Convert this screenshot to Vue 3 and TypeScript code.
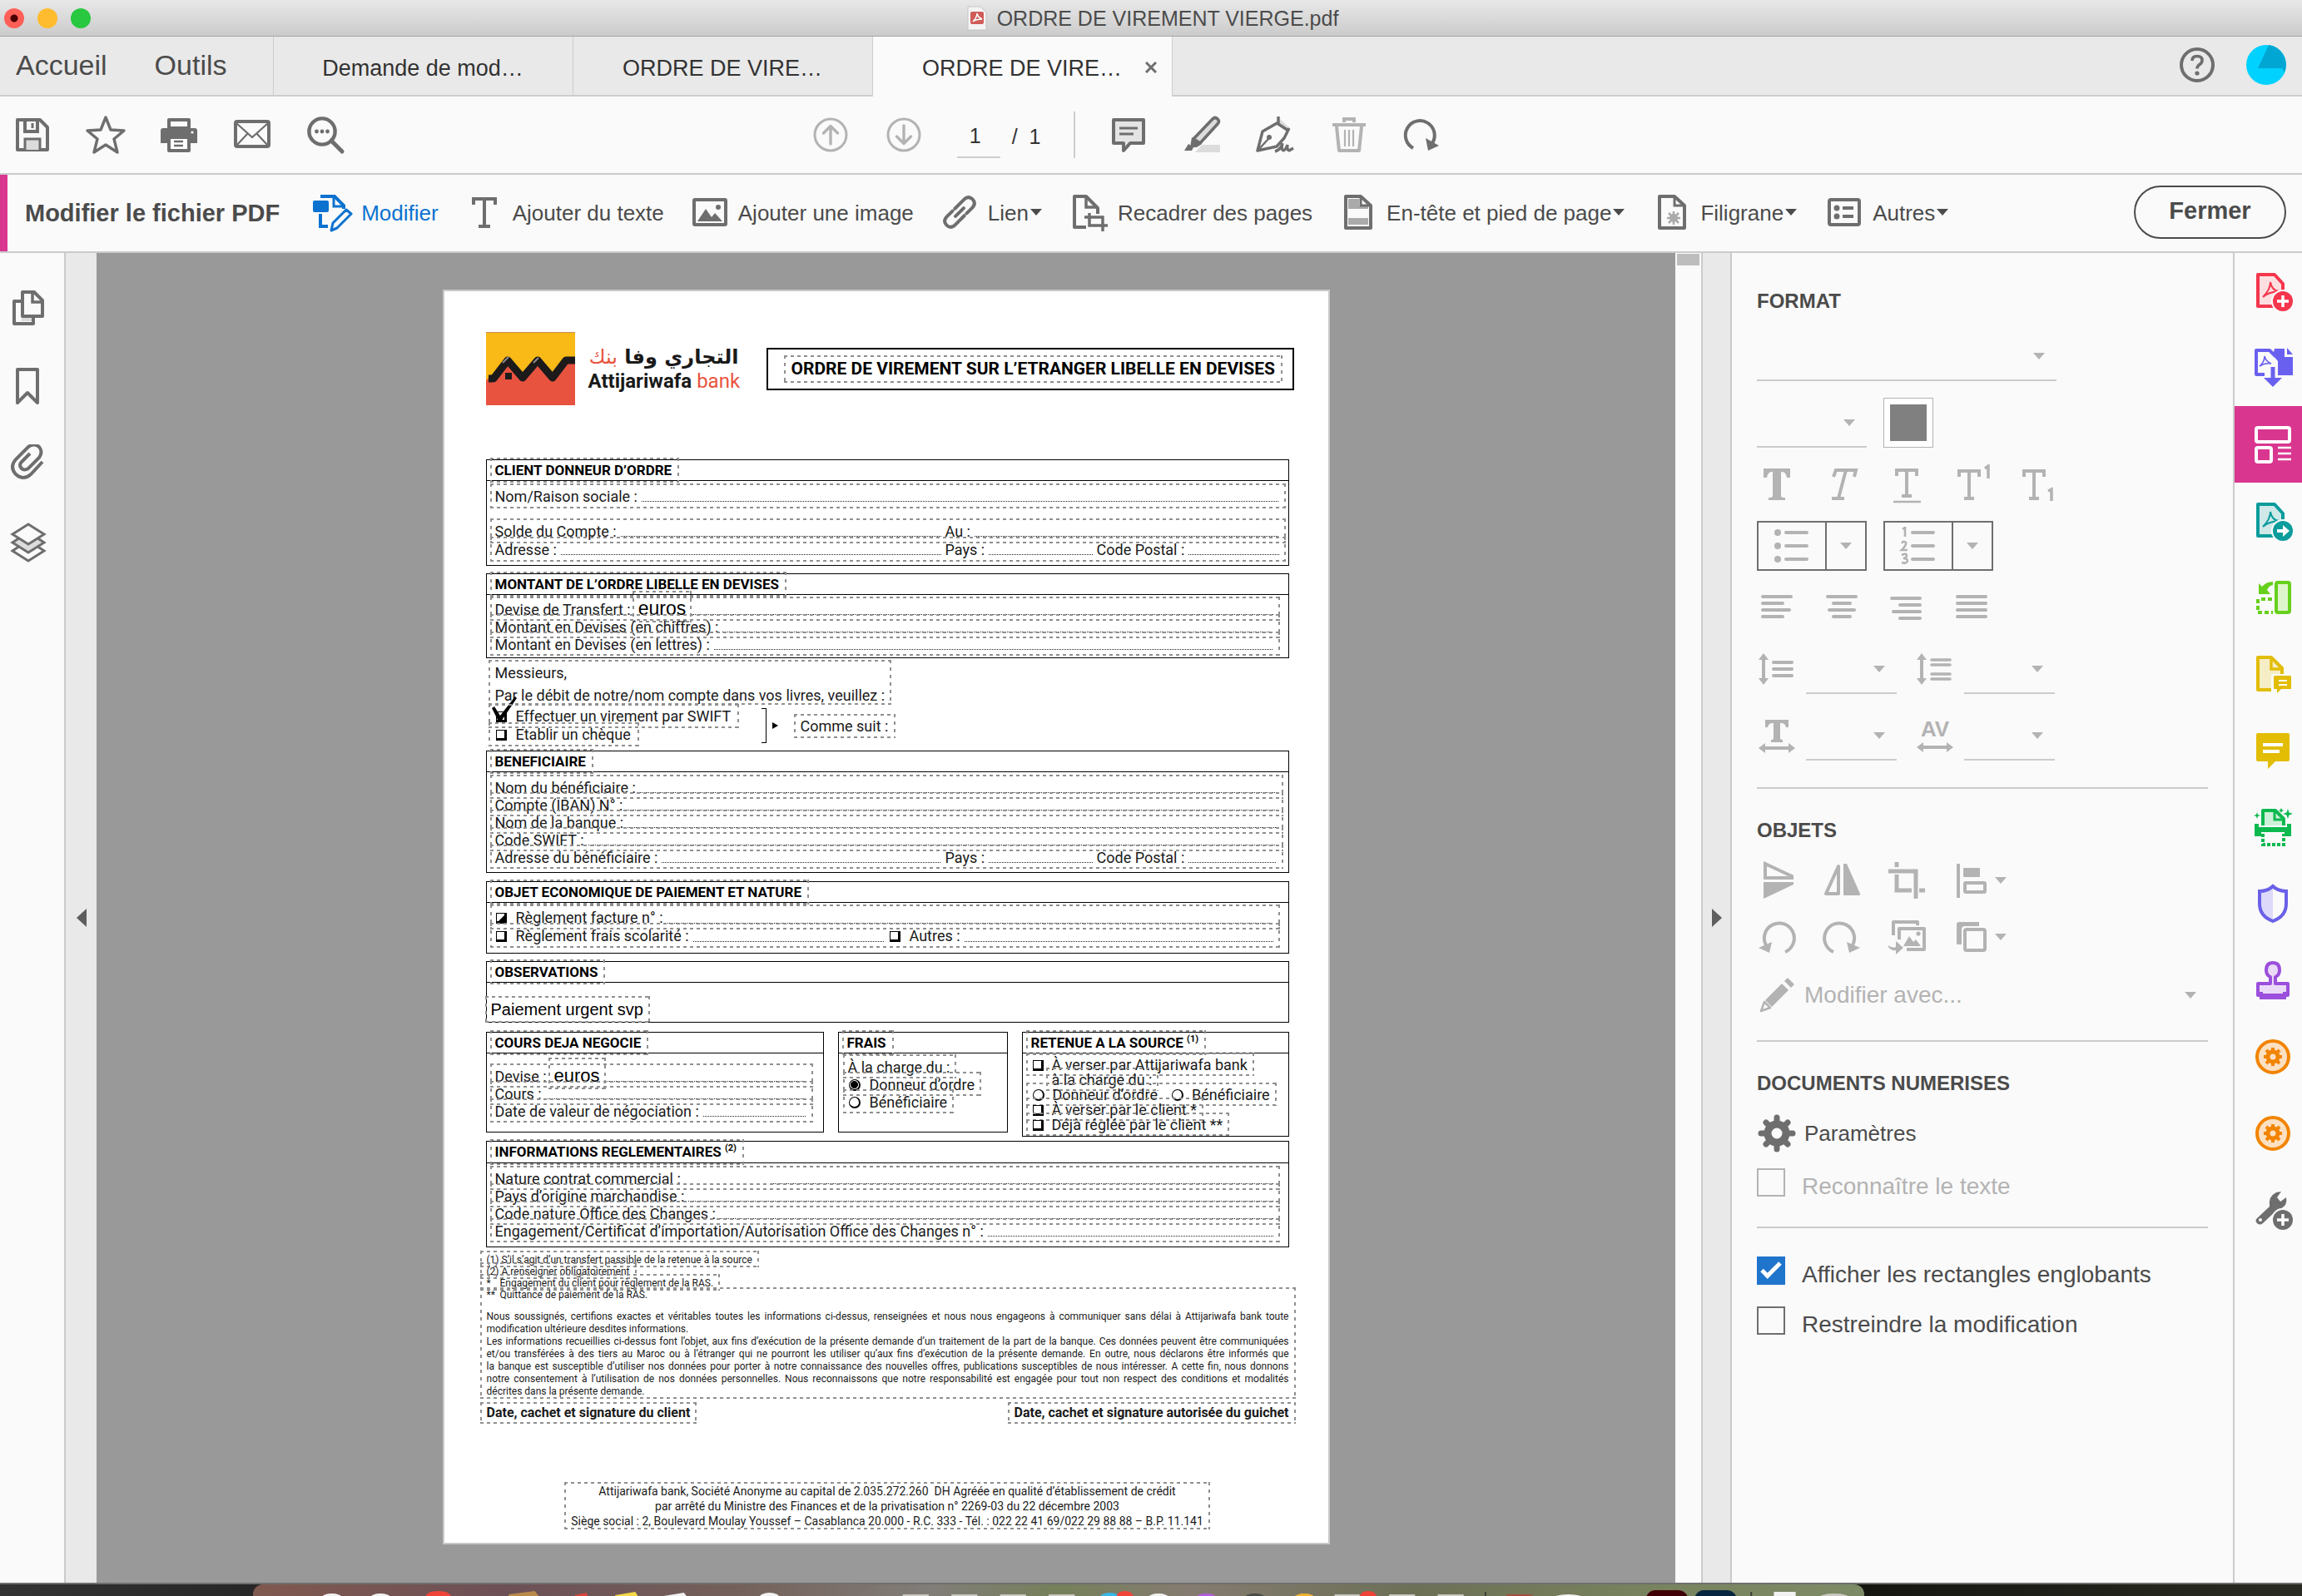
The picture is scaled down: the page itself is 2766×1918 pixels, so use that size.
<script setup lang="ts">
import { h, ref, type FunctionalComponent } from 'vue'

/* Every glyph is drawn in a 48 × 48 box. */
const glyphs: Record<string, string> = {
  save: '<path d="M6 6H33L42 15V42H6Z" fill="none" stroke="currentColor" stroke-width="4" stroke-linejoin="round"/><path d="M15 6V20H30V6" fill="none" stroke="currentColor" stroke-width="4"/><path d="M24 10V16" stroke="currentColor" stroke-width="3"/><path d="M15 42V29H33V42" fill="#dcdcdc" stroke="currentColor" stroke-width="3"/>',
  star: '<path d="M24 3L30 18L46 19L34 29L38 45L24 36L10 45L14 29L2 19L18 18Z" fill="none" stroke="currentColor" stroke-width="3.4" stroke-linejoin="round"/>',
  print: '<path d="M12 6H36V16H12Z" fill="none" stroke="currentColor" stroke-width="4" stroke-linejoin="round"/><path d="M5 16H43Q46 16 46 19V34H38V28H10V34H2V19Q2 16 5 16Z" fill="currentColor"/><path d="M12 27H36V43H12Z" fill="#fff" stroke="currentColor" stroke-width="4" stroke-linejoin="round"/><path d="M18 32H29M18 37H29" stroke="currentColor" stroke-width="2.4"/><circle cx="40" cy="21" r="1.6" fill="#fff"/>',
  mail: '<rect x="4" y="8" width="40" height="30" rx="2" fill="none" stroke="currentColor" stroke-width="4"/><path d="M5 10L24 27L43 10M5 37L19 22M43 37L29 22" fill="none" stroke="currentColor" stroke-width="2.2"/>',
  find: '<circle cx="20" cy="20" r="15.6" fill="none" stroke="currentColor" stroke-width="4.4"/><path d="M31 31L44 44" stroke="currentColor" stroke-width="5" stroke-linecap="round"/><circle cx="13.500" cy="20" r="2.4" fill="currentColor"/><circle cx="20" cy="20" r="2.4" fill="currentColor"/><circle cx="26.500" cy="20" r="2.4" fill="currentColor"/>',
  up: '<circle cx="24" cy="24" r="19" fill="none" stroke="currentColor" stroke-width="3"/><path d="M24 35V14M15.500 22L24 13.500L32.500 22" fill="none" stroke="currentColor" stroke-width="3.4" stroke-linecap="round" stroke-linejoin="round"/>',
  down: '<circle cx="24" cy="24" r="19" fill="none" stroke="currentColor" stroke-width="3"/><path d="M24 13V34M15.500 26L24 34.500L32.500 26" fill="none" stroke="currentColor" stroke-width="3.4" stroke-linecap="round" stroke-linejoin="round"/>',
  comment: '<path d="M6 6H42V34H26L18 43V34H6Z" fill="#e4e4e4" stroke="currentColor" stroke-width="4" stroke-linejoin="round"/><path d="M13 16H35M13 23H30" stroke="currentColor" stroke-width="3"/>',
  marker: '<path d="M16 45L24 36H46V45Z" fill="#dcdcdc"/><path d="M14 29L37 5Q40 2 43 5Q46 8 43 11L22 34Z" fill="#dcdcdc" stroke="currentColor" stroke-width="3.600" stroke-linejoin="round"/><path d="M12 27L24 35L18 39H10Z" fill="currentColor"/><path d="M3 43L8 35L14 39L12 43Z" fill="currentColor"/>',
  sign: '<path d="M28 3L42 16L38 20L26 10Z" fill="#dcdcdc"/><path d="M28 2V11L40 19M28 9L9 20L3 43L26 38L35 28L41 16" fill="none" stroke="currentColor" stroke-width="3.400" stroke-linejoin="round"/><path d="M3 43L16 29" stroke="currentColor" stroke-width="2.4"/><circle cx="17" cy="27" r="3" fill="currentColor"/><path d="M24 44Q31 42 33 34Q31 42 34 43Q37 42 39 36Q38 42 41 43L46 40" fill="none" stroke="currentColor" stroke-width="3.4"/>',
  trash: '<path d="M5 10H45V14H5Z" fill="currentColor"/><path d="M19 9V5H31V9" fill="none" stroke="currentColor" stroke-width="4"/><path d="M10 14L13 43H37L40 14" fill="none" stroke="currentColor" stroke-width="4" stroke-linejoin="round"/><path d="M20 18V38M25 18V38M30 18V38" stroke="currentColor" stroke-width="2.200"/>',
  rotate: '<path d="M14 40A17.500 17.500 0 1 1 37 34" fill="none" stroke="currentColor" stroke-width="4"/><path d="M29 28L45 37L32 43Z" fill="currentColor"/>',
  help: '<circle cx="24" cy="24" r="19" fill="none" stroke="currentColor" stroke-width="4"/><path d="M18 19Q18 13.500 24 13.500Q30 13.500 30 18.500Q30 21.500 27 23.500Q24 25.500 24 28.500" fill="none" stroke="currentColor" stroke-width="3.600"/><circle cx="24" cy="34" r="2.600" fill="currentColor"/>',
  edit: '<path d="M9 5H26L37 16V20" fill="none" stroke="currentColor" stroke-width="4"/><path d="M25 5V17H37" fill="none" stroke="currentColor" stroke-width="3"/><path d="M9 26V41H18" fill="none" stroke="currentColor" stroke-width="4"/><rect x="0" y="10" width="19" height="14" rx="2" fill="currentColor"/><path d="M40 21L46 26L29 43L22 46L24 37Z" fill="#fafafa" stroke="currentColor" stroke-width="3" stroke-linejoin="round"/>',
  text: '<path d="M11 15V8H37V15M24 8V41M17 41H31" fill="none" stroke="currentColor" stroke-width="4"/>',
  image: '<rect x="5" y="9" width="38" height="30" rx="1" fill="none" stroke="currentColor" stroke-width="4"/><path d="M9 35L19 20L26 30L30 25L39 35Z" fill="currentColor"/><circle cx="34" cy="18" r="3" fill="currentColor"/>',
  link: '<g fill="none" stroke="currentColor" stroke-width="4" stroke-linecap="round" transform="rotate(-45 24 24)"><path d="M23 17H38Q46 17 46 24T38 31H29"/><path d="M25 31H10Q2 31 2 24T10 17H19"/><path d="M17 24H31"/></g>',
  crop: '<path d="M20 42H6V5H20L34 19V26" fill="none" stroke="currentColor" stroke-width="4" stroke-linejoin="round"/><path d="M20 5V18H34" fill="none" stroke="currentColor" stroke-width="3.500"/><path d="M24 25V40H46M18 30H40V47" fill="none" stroke="currentColor" stroke-width="3.500"/>',
  header: '<path d="M9 5H27L39 16V43H9Z" fill="none" stroke="currentColor" stroke-width="4" stroke-linejoin="round"/><path d="M12 8H25V17H36V20H12Z" fill="#aaa"/><path d="M12 31H36V39H12Z" fill="#aaa"/><path d="M27 6V16H38" fill="none" stroke="currentColor" stroke-width="3"/>',
  filigrane: '<path d="M9 5H27L39 16V43H9Z" fill="none" stroke="currentColor" stroke-width="4" stroke-linejoin="round"/><path d="M27 6V16H38" fill="none" stroke="currentColor" stroke-width="3"/><circle cx="26" cy="31" r="5" fill="#aaa"/><path d="M26 23V39M18 31H34M20 25L32 37M32 25L20 37" stroke="#aaa" stroke-width="2.500"/>',
  autres: '<rect x="6" y="9" width="36" height="30" rx="2" fill="none" stroke="currentColor" stroke-width="4"/><circle cx="15" cy="19" r="3.500" fill="currentColor"/><circle cx="15" cy="29" r="3.500" fill="currentColor"/><path d="M22 19H35M22 29H35" stroke="currentColor" stroke-width="4"/>',
  pages: '<path d="M15 16H7V43H30V36" fill="none" stroke="currentColor" stroke-width="4" stroke-linejoin="round"/><path d="M16 36H28V40H16Z" fill="#dcdcdc"/><path d="M17 5H31L41 15V34H17Z" fill="#fafafa" stroke="currentColor" stroke-width="4" stroke-linejoin="round"/><path d="M29 5V17H41" fill="none" stroke="currentColor" stroke-width="3.500"/>',
  bookmark: '<path d="M11 4H35V44L23 32L11 44Z" fill="none" stroke="currentColor" stroke-width="4" stroke-linejoin="round"/>',
  clip: '<path d="M41 21L27 36Q18 44 9 36Q1 27 9 18L24 3Q31 -2 37 3Q42 9 37 16L24 29Q19 32 16 29Q12 25 16 21L26 11" fill="none" stroke="currentColor" stroke-width="4"/>',
  layers: '<path d="M5 34L24 46L43 34L34 28H14Z" fill="#fafafa" stroke="currentColor" stroke-width="3"/><path d="M5 24L24 36L43 24L34 18H14Z" fill="#dcdcdc" stroke="currentColor" stroke-width="3"/><path d="M5 14L24 2L43 14L24 26Z" fill="#fafafa" stroke="currentColor" stroke-width="3"/>',
  bold: '<path d="M8 5H40V16H36Q35 9 30 9H29V38Q29 40 34 40V43H14V40Q19 40 19 38V9H18Q13 9 12 16H8Z" fill="currentColor"/>',
  italic: '<path d="M14 15L17 7H41L39 15M29 7L20 41M12 41H27" fill="none" stroke="currentColor" stroke-width="4"/>',
  under: '<path d="M12 14V7H36V14M24 7V38M18 38H30" fill="none" stroke="currentColor" stroke-width="4"/><path d="M8 45H41" stroke="currentColor" stroke-width="2.500"/>',
  sup: '<path d="M9 15V8H33V15M21 8V41M15 41H27" fill="none" stroke="currentColor" stroke-width="4"/><path d="M40 5L44 2V17" fill="none" stroke="currentColor" stroke-width="3.500"/>',
  sub: '<path d="M9 15V8H33V15M21 8V41M15 41H27" fill="none" stroke="currentColor" stroke-width="4"/><path d="M38 32L42 30V44" fill="none" stroke="currentColor" stroke-width="3.500"/>',
  bullets: '<circle cx="7" cy="7" r="4" fill="currentColor"/><circle cx="7" cy="23" r="4" fill="currentColor"/><circle cx="7" cy="39" r="4" fill="currentColor"/><path d="M17 7H42M17 23H42M17 39H42" stroke="currentColor" stroke-width="4" stroke-linecap="round"/>',
  numbers: '<path d="M5 3L8 1V12M4 20Q6 16 9 19Q10 22 4 28H11M4 34Q10 31 10 35Q10 37 6 38Q11 38 11 41Q10 45 4 43" fill="none" stroke="currentColor" stroke-width="2.600"/><path d="M17 7H42M17 23H42M17 39H42" stroke="currentColor" stroke-width="4" stroke-linecap="round"/>',
  left: '<path d="M7 11H41M7 19H31M7 27H39M7 35H31" stroke="currentColor" stroke-width="4" stroke-linecap="round"/>',
  center: '<path d="M7 11H41M14 19H34M9 27H39M14 35H34" stroke="currentColor" stroke-width="4" stroke-linecap="round"/>',
  right: '<path d="M6 13H40M16 21H40M8 29H40M16 37H40" stroke="currentColor" stroke-width="4" stroke-linecap="round"/>',
  justify: '<path d="M7 11H41M7 19H41M7 27H41M7 35H41" stroke="currentColor" stroke-width="4" stroke-linecap="round"/>',
  leading: '<path d="M8 10V38" stroke="currentColor" stroke-width="4"/><path d="M2 13L8 5L14 13ZM2 35L8 43L14 35Z" fill="currentColor"/><path d="M20 16H42M20 24H42M20 32H42" stroke="currentColor" stroke-width="4" stroke-linecap="round"/>',
  spacing: '<path d="M8 10V38" stroke="currentColor" stroke-width="4"/><path d="M2 13L8 5L14 13ZM2 35L8 43L14 35Z" fill="currentColor"/><path d="M20 13H42M20 19H42M20 30H42M20 36H42" stroke="currentColor" stroke-width="3.600" stroke-linecap="round"/>',
  scaleX: '<path d="M10 5H38V14H35Q34 9 29 9H28V27Q28 29 31 29V32H17V29Q20 29 20 27V9H19Q14 9 13 14H10Z" fill="currentColor"/><path d="M8 39H40" stroke="currentColor" stroke-width="4"/><path d="M10 33L2 39L10 45ZM38 33L46 39L38 45Z" fill="currentColor"/>',
  arrowX: '<path d="M8 8H40" stroke="currentColor" stroke-width="4"/><path d="M10 2L2 8L10 14ZM38 2L46 8L38 14Z" fill="currentColor"/>',
  flipV: '<path d="M10 4L42 19V21H10Z" fill="none" stroke="currentColor" stroke-width="4"/><path d="M8 26H44V29L8 46Z" fill="currentColor"/>',
  flipH: '<path d="M20 7V40H5Z" fill="none" stroke="currentColor" stroke-width="4" stroke-linejoin="round"/><path d="M26 4H30L46 40V42H26Z" fill="currentColor"/>',
  cropObj: '<path d="M2 13H35V46M12 2V8M12 17V36H30M39 36H46" fill="none" stroke="currentColor" stroke-width="5"/>',
  alignObj: '<path d="M8 4V45" stroke="currentColor" stroke-width="4"/><rect x="14" y="9" width="20" height="11" rx="1" fill="currentColor"/><rect x="16" y="27" width="24" height="11" rx="1" fill="none" stroke="currentColor" stroke-width="4"/>',
  rotL: '<path d="M34 42A18 18 0 1 0 11 34" fill="none" stroke="currentColor" stroke-width="4"/><path d="M2 37L18 30L15 43Z" fill="currentColor"/>',
  rotR: '<path d="M14 42A18 18 0 1 1 37 34" fill="none" stroke="currentColor" stroke-width="4"/><path d="M46 37L30 30L33 43Z" fill="currentColor"/>',
  replace: '<path d="M8 22V6H37V10" fill="none" stroke="currentColor" stroke-width="4" stroke-linejoin="round"/><path d="M15 27V14H45V39H24" fill="none" stroke="currentColor" stroke-width="4" stroke-linejoin="round"/><path d="M20 35L27 23L32 30L35 27L41 35Z" fill="currentColor"/><circle cx="38" cy="20" r="2.600" fill="currentColor"/><path d="M1 34Q8 38 11 36V29L20 37L11 45V40Q4 41 1 34Z" fill="currentColor"/>',
  arrange: '<path d="M6 33V9Q6 6 9 6H33V11H16Q12 11 12 15V33Z" fill="currentColor"/><rect x="16" y="15" width="24" height="25" rx="2" fill="none" stroke="currentColor" stroke-width="4"/>',
  pencil: '<path d="M10 30L30 10L38 18L18 38Z" fill="currentColor"/><path d="M33 7L37 3L45 11L41 15Z" fill="currentColor"/><path d="M9 32L16 39L5 43Z" fill="none" stroke="currentColor" stroke-width="2.500" stroke-linejoin="round"/>',
  gear: '<circle cx="24" cy="24" r="11" fill="none" stroke="currentColor" stroke-width="9"/><path d="M24 5V12M24 36V43M5 24H12M36 24H43M11 11L15 15M33 33L37 37M37 11L33 15M15 33L11 37" stroke="currentColor" stroke-width="7" stroke-linecap="round"/>',
  create: '<path d="M6 4H26L36 15V42H6Z" fill="#fddfe2" stroke="currentColor" stroke-width="4" stroke-linejoin="round"/><path d="M12 31Q21 22 21 13Q23 24 32 24Q18 25 12 31Z" fill="none" stroke="currentColor" stroke-width="2"/><circle cx="36" cy="36" r="14" fill="#fafafa"/><circle cx="36" cy="36" r="12" fill="currentColor"/><path d="M36 29V43M29 36H43" stroke="#fff" stroke-width="3.500"/>',
  export: '<path d="M14 32H4V3H20L27 10" fill="none" stroke="currentColor" stroke-width="4" stroke-linejoin="round"/><path d="M26 1H38V11H48V33H30V16L24 9Z" fill="currentColor"/><path d="M41 0L48 8H41Z" fill="currentColor"/><path d="M8 22Q14 17 14 10Q16 17 22 19Q14 18 8 22Z" fill="none" stroke="currentColor" stroke-width="1.600"/><path d="M24 21V38" stroke="#fafafa" stroke-width="10"/><path d="M24 23V40" stroke="currentColor" stroke-width="5"/><path d="M13 36H35L24 47Z" fill="currentColor"/>',
  layout: '<rect x="4" y="4" width="40" height="17" rx="2" fill="none" stroke="currentColor" stroke-width="4"/><rect x="4" y="28" width="18" height="17" rx="2" fill="none" stroke="currentColor" stroke-width="4"/><path d="M30 28H46M30 35H46M30 42H46" stroke="currentColor" stroke-width="2.400"/>',
  share: '<path d="M6 4H26L36 15V42H6Z" fill="#cfe8e8" stroke="currentColor" stroke-width="4" stroke-linejoin="round"/><path d="M12 31Q21 22 21 13Q23 24 32 24Q18 25 12 31Z" fill="none" stroke="currentColor" stroke-width="2"/><circle cx="36" cy="36" r="14" fill="#fafafa"/><circle cx="36" cy="36" r="12" fill="currentColor"/><path d="M29 34H36V29L44 36L36 43V38H29Z" fill="#fff"/>',
  organize: '<rect x="28" y="6" width="16" height="36" rx="2" fill="#def5cb" stroke="currentColor" stroke-width="4"/><path d="M6 26V42H24M10 26H24" fill="none" stroke="currentColor" stroke-width="4" stroke-dasharray="5 3"/><path d="M7 7V20H21L17 15Q19 10 24 9V5Q16 5 11 11Z" fill="currentColor"/>',
  notes: '<path d="M6 4H22L35 17V43H6Z" fill="#f5edc6" stroke="currentColor" stroke-width="4" stroke-linejoin="round"/><path d="M22 4V18H35" fill="none" stroke="currentColor" stroke-width="3.500"/><path d="M22 24H48V48H22Z" fill="#fafafa"/><path d="M26 26H45Q46 26 46 27V42H34L29 47V42H26Q25 42 25 41V27Z" fill="currentColor"/><path d="M31 32H41M31 37H41" stroke="#fff" stroke-width="2.200"/>',
  note: '<path d="M6 3H42Q44 3 44 5V35Q44 37 42 37H27L18 46V37H6Q4 37 4 35V5Q4 3 6 3Z" fill="currentColor"/><path d="M12 17H36M12 25H32" stroke="#fff" stroke-width="4"/>',
  scan: '<path d="M12 22V4H27L37 14V22" fill="#cdf0d8" stroke="currentColor" stroke-width="4" stroke-linejoin="round"/><path d="M26 4V15H37" fill="none" stroke="currentColor" stroke-width="3"/><path d="M2 20H7V24H41V20H46V35H38V30H10V35H2Z" fill="currentColor"/><path d="M12 32V45H37V32" fill="none" stroke="currentColor" stroke-width="4" stroke-dasharray="4 2"/><path d="M42 2L43.500 6.500L48 8L43.500 9.500L42 14L40.500 9.500L36 8L40.500 6.500ZM5 6L6 9L9 10L6 11L5 14L4 11L1 10L4 9ZM34 1L35 3L37 4L35 5L34 7L33 5L31 4L33 3Z" fill="currentColor"/>',
  shield: '<path d="M24 3V45Q8 39 8 24V9Q18 9 24 3Z" fill="#dcd9fb"/><path d="M24 3Q30 9 40 9V24Q40 39 24 45Q8 39 8 24V9Q18 9 24 3Z" fill="none" stroke="currentColor" stroke-width="4"/>',
  stamp: '<path d="M21 28V20Q16 18 16 12Q16 3 24 3T32 12Q32 18 27 20V28H42V42H6V28Z" fill="#ead9f7" stroke="currentColor" stroke-width="4" stroke-linejoin="round"/><path d="M10 38V45H38V38" fill="none" stroke="currentColor" stroke-width="4"/>',
  action: '<circle cx="24" cy="24" r="19" fill="#fde0c2" stroke="currentColor" stroke-width="4"/><circle cx="24" cy="24" r="6" fill="none" stroke="currentColor" stroke-width="5"/><path d="M24 13V17M24 31V35M13 24H17M31 24H35M16 16L19 19M29 29L32 32M32 16L29 19M19 29L16 32" stroke="currentColor" stroke-width="4"/>',
  wrench: '<path d="M5 34L20 20Q18 8 28 3L34 2L29 9L33 14L40 9Q42 21 30 23L12 40Q8 43 5 40Q2 37 5 34Z" fill="currentColor"/><circle cx="9" cy="36" r="2" fill="#fafafa"/><circle cx="36" cy="36" r="14" fill="#fafafa"/><circle cx="36" cy="36" r="12" fill="currentColor"/><path d="M36 29V43M29 36H43" stroke="#fff" stroke-width="3.500"/>',
}

const Icon: FunctionalComponent<{ name: string }> = (props) =>
  h('svg', { width: 48, height: 48, viewBox: '0 0 48 48', 'aria-hidden': 'true', innerHTML: glyphs[props.name] })
Icon.props = ['name']

const tabs = ['Demande de mod…', 'ORDRE DE VIRE…', 'ORDRE DE VIRE…']
const activeTab = ref(2)

const fileTools = [
  { icon: 'save', label: 'Enregistrer' },
  { icon: 'star', label: 'Favoris' },
  { icon: 'print', label: 'Imprimer' },
  { icon: 'mail', label: 'Envoyer' },
  { icon: 'find', label: 'Rechercher' },
]
const noteTools = [
  { icon: 'comment', label: 'Commentaire', dim: false },
  { icon: 'marker', label: 'Surligner', dim: false },
  { icon: 'sign', label: 'Signer', dim: false },
  { icon: 'trash', label: 'Supprimer', dim: true },
  { icon: 'rotate', label: 'Rotation', dim: false },
]
const editTools = [
  { icon: 'edit', label: 'Modifier', menu: false },
  { icon: 'text', label: 'Ajouter du texte', menu: false },
  { icon: 'image', label: 'Ajouter une image', menu: false },
  { icon: 'link', label: 'Lien', menu: true },
  { icon: 'crop', label: 'Recadrer des pages', menu: false },
  { icon: 'header', label: 'En-tête et pied de page', menu: true },
  { icon: 'filigrane', label: 'Filigrane', menu: true },
  { icon: 'autres', label: 'Autres', menu: true },
]
const navTools = [
  { icon: 'pages', label: 'Vignettes' },
  { icon: 'bookmark', label: 'Signets' },
  { icon: 'clip', label: 'Pièces jointes' },
  { icon: 'layers', label: 'Calques' },
]
const rail = [
  { icon: 'create', color: '#f5364c' },
  { icon: 'export', color: '#6a60f0' },
  { icon: 'layout', color: '#ffffff' },
  { icon: 'share', color: '#0b9c9c' },
  { icon: 'organize', color: '#66d01c' },
  { icon: 'notes', color: '#e2bd04' },
  { icon: 'note', color: '#e2bd04' },
  { icon: 'scan', color: '#0cb94f' },
  { icon: 'shield', color: '#6a60e8' },
  { icon: 'stamp', color: '#9b4fdc' },
  { icon: 'action', color: '#f28400' },
  { icon: 'action', color: '#f28400' },
  { icon: 'wrench', color: '#6e6e6e' },
]
const textStyles = ['bold', 'italic', 'under', 'sup', 'sub']
const alignments = ['left', 'center', 'right', 'justify']

const legal = [
  'Nous soussignés, certifions exactes et véritables toutes les informations ci-dessus, renseignées et nous nous engageons à communiquer sans délai à Attijariwafa bank toute',
  'modification ultérieure desdites informations.',
  'Les informations recueillies ci-dessus font l’objet, aux fins d’exécution de la présente demande d’un traitement de la part de la banque. Ces données peuvent être communiquées',
  'et/ou transférées à des tiers au Maroc ou à l’étranger qui ne pourront les utiliser qu’aux fins d’exécution de la présente demande. En outre, nous déclarons être informés que',
  'la banque est susceptible d’utiliser nos données pour porter à notre connaissance des nouvelles offres, publications susceptibles de nous intéresser. A cette fin, nous donnons',
  'notre consentement à l’utilisation de nos données personnelles. Nous reconnaissons que notre responsabilité est engagée pour tout non respect des conditions et modalités',
  'décrites dans la présente demande.',
]
const shortLines = [1, 6]

const showBoxes = ref(true)
const restrict = ref(false)
</script>

<template>
  <div class="window">
    <header class="titlebar">
      <span class="lights"><i class="red"></i><i class="yellow"></i><i class="green"></i></span>
      <span class="doc-title">
        <svg width="24" height="30" viewBox="0 0 24 30" aria-hidden="true"><path d="M1 1H16L23 8V29H1Z" fill="#f4f4f4" stroke="#c4c4c4" /><rect x="4" y="7" width="16" height="15" rx="2" fill="#cf5c58" /><path d="M7 19Q12 14 12 9Q13 14 18 16Q11 16 7 19Z" fill="none" stroke="#fff" stroke-width="1.5" /></svg>
        ORDRE DE VIREMENT VIERGE.pdf
      </span>
    </header>

    <nav class="tabbar">
      <button class="home" type="button">Accueil</button>
      <button class="home tools" type="button">Outils</button>
      <div class="tabs">
        <button v-for="(tab, i) in tabs" :key="i" type="button" class="tab" :class="{ active: i === activeTab }" @click="activeTab = i">
          {{ tab }}
          <svg v-if="i === activeTab" class="close" width="14" height="14" viewBox="0 0 14 14" aria-hidden="true"><path d="M1 1L13 13M13 1L1 13" stroke="#6e6e6e" stroke-width="3" /></svg>
        </button>
      </div>
      <div class="account">
        <button type="button" class="icon-btn" aria-label="Aide"><Icon name="help" /></button>
        <svg width="48" height="48" viewBox="0 0 48 48" aria-hidden="true"><circle cx="24" cy="24" r="24" fill="#00d2ff" /><path d="M27 0A24 24 0 0 1 46 33L43 28H14Z" fill="#02a6d3" /></svg>
      </div>
    </nav>

    <div class="toolbar">
      <div class="group side">
        <button v-for="t in fileTools" :key="t.icon" type="button" class="icon-btn" :aria-label="t.label"><Icon :name="t.icon" /></button>
      </div>
      <div class="group">
        <button type="button" class="icon-btn dim" aria-label="Page précédente"><Icon name="up" /></button>
        <button type="button" class="icon-btn dim" aria-label="Page suivante"><Icon name="down" /></button>
        <div class="pager">
          <input value="1" aria-label="Numéro de page" />
          <span>/&nbsp; 1</span>
        </div>
        <button v-for="t in noteTools" :key="t.icon" type="button" class="icon-btn" :class="{ dim: t.dim }" :aria-label="t.label"><Icon :name="t.icon" /></button>
      </div>
      <div class="side"></div>
    </div>

    <div class="editbar">
      <h1>Modifier le fichier PDF</h1>
      <button v-for="(t, i) in editTools" :key="t.icon" type="button" class="edit-tool" :class="{ current: i === 0 }">
        <Icon :name="t.icon" /><span>{{ t.label }}</span><i v-if="t.menu" class="caret"></i>
      </button>
      <button type="button" class="done">Fermer</button>
    </div>

    <div class="workspace">
      <nav class="navpane">
        <button v-for="t in navTools" :key="t.icon" type="button" class="icon-btn" :aria-label="t.label"><Icon :name="t.icon" /></button>
      </nav>
      <button type="button" class="gutter" aria-label="Replier le volet gauche"><i class="point-left"></i></button>

      <main class="canvas">
        <article class="page" :class="{ boxed: showBoxes }">
          <div class="masthead">
            <svg width="107" height="88" viewBox="0 0 107 88" aria-hidden="true">
              <path d="M0 0H107V88H0Z" fill="#f9b916" />
              <path d="M0 58L26 34L45 56L62 34L81 56L97 32H107V88H0Z" fill="#e8533f" />
              <path d="M3 56H9L26 34L44 55L62 34L80 55L96 34H107" fill="none" stroke="#1c1a1b" stroke-width="9" stroke-linejoin="round" />
              <path d="M23 49H31V57H23Z" fill="#1c1a1b" />
              <path d="M20 37L27 30M57 37L63 31" stroke="#8b8989" stroke-width="2" />
              <path d="M0 0H107V1H0Z" fill="#c98b55" />
            </svg>
            <div class="brand">
              <span class="brand-ar" lang="ar" dir="rtl">التجاري وفا <em>بنك</em></span>
              <span class="brand-fr">Attijariwafa <em>bank</em></span>
            </div>
            <h2><span class="bb">ORDRE DE VIREMENT SUR L’ETRANGER LIBELLE EN DEVISES</span></h2>
          </div>

          <section class="card client">
            <h3><span class="bb">CLIENT DONNEUR D’ORDRE</span></h3>
            <div class="rows tall">
              <div class="row bb"><span>Nom/Raison sociale :</span><i class="fill"></i></div>
              <div class="row bb spaced"><span>Solde du Compte :</span><i class="fill"></i><span class="third">Au :<i class="fill"></i></span></div>
              <div class="row bb"><span>Adresse :</span><i class="fill"></i><span class="third"><span class="country">Pays :<i class="fill"></i></span>Code Postal :<i class="fill"></i></span></div>
            </div>
          </section>

          <section class="card amount">
            <h3><span class="bb">MONTANT DE L’ORDRE LIBELLE EN DEVISES</span></h3>
            <div class="rows">
              <div class="row bb"><span>Devise de Transfert :</span><span class="typed bb">euros</span><i class="fill"></i></div>
              <div class="row bb"><span>Montant en Devises (en chiffres) :</span><i class="fill"></i></div>
              <div class="row bb"><span>Montant en Devises (en lettres) :</span><i class="fill"></i></div>
            </div>
          </section>

          <div class="request">
            <p class="bb">Messieurs,<br />Par le débit de notre/nom compte dans vos livres, veuillez :</p>
            <div class="choices">
              <div class="options">
                <label class="bb pick"><input type="checkbox" />Effectuer un virement par SWIFT
                  <svg class="tick" width="32" height="32" viewBox="0 0 32 32" aria-hidden="true"><path d="M1 15L4 13L11 24L29 1L31 3L12 31H9Z" fill="#000" /></svg>
                </label>
                <label class="bb pick"><input type="checkbox" />Etablir un chèque</label>
              </div>
              <span class="bracket"></span>
              <i class="pointer"></i>
              <span class="bb follow">Comme suit :</span>
            </div>
          </div>

          <section class="card payee">
            <h3><span class="bb">BENEFICIAIRE</span></h3>
            <div class="rows">
              <div class="row bb"><span>Nom du bénéficiaire :</span><i class="fill"></i></div>
              <div class="row bb"><span>Compte (IBAN) N° :</span><i class="fill"></i></div>
              <div class="row bb"><span>Nom de la banque :</span><i class="fill"></i></div>
              <div class="row bb"><span>Code SWIFT :</span><i class="fill"></i></div>
              <div class="row bb"><span>Adresse du bénéficiaire :</span><i class="fill"></i><span class="third"><span class="country">Pays :<i class="fill"></i></span>Code Postal :<i class="fill"></i></span></div>
            </div>
          </section>

          <section class="card purpose">
            <h3><span class="bb">OBJET ECONOMIQUE DE PAIEMENT ET NATURE</span></h3>
            <div class="rows tall">
              <div class="row bb"><label class="pick"><input type="checkbox" checked />Règlement facture n° :</label><i class="fill"></i></div>
              <div class="row bb"><label class="pick"><input type="checkbox" />Règlement frais scolarité :</label><i class="fill"></i><span class="other"><label class="pick"><input type="checkbox" />Autres :</label><i class="fill"></i></span></div>
            </div>
          </section>

          <section class="card remarks">
            <h3><span class="bb">OBSERVATIONS</span></h3>
            <div class="rows"><span class="bb remark">Paiement urgent svp</span></div>
          </section>

          <div class="trio">
            <section class="card rate">
              <h3><span class="bb">COURS DEJA NEGOCIE</span></h3>
              <div class="rows">
                <div class="row bb"><span>Devise :</span><span class="typed bb">euros</span><i class="fill"></i></div>
                <div class="row bb"><span>Cours :</span><i class="fill"></i></div>
                <div class="row bb"><span>Date de valeur de négociation :</span><i class="fill"></i></div>
              </div>
            </section>
            <section class="card fees">
              <h3><span class="bb">FRAIS</span></h3>
              <div class="rows">
                <span class="bb pick">À la charge du :</span>
                <label class="bb pick"><input type="radio" name="fees" checked />Donneur d’ordre</label>
                <label class="bb pick"><input type="radio" name="fees" />Bénéficiaire</label>
              </div>
            </section>
            <section class="card tax">
              <h3><span class="bb">RETENUE A LA SOURCE <sup>(1)</sup></span></h3>
              <div class="rows">
                <label class="bb pick"><input type="checkbox" />À verser par Attijariwafa bank</label>
                <span class="bb pick indent">à la charge du :</span>
                <span class="bb pair"><label class="pick"><input type="radio" name="tax" />Donneur d’ordre</label><label class="pick"><input type="radio" name="tax" />Bénéficiaire</label></span>
                <label class="bb pick"><input type="checkbox" />À verser par le client *</label>
                <label class="bb pick"><input type="checkbox" />Déjà réglée par le client **</label>
              </div>
            </section>
          </div>

          <section class="card legalinfo">
            <h3><span class="bb">INFORMATIONS REGLEMENTAIRES <sup>(2)</sup></span></h3>
            <div class="rows">
              <div class="row bb"><span class="wide">Nature contrat commercial :</span><i class="fill"></i></div>
              <div class="row bb"><span>Pays d’origine marchandise :</span><i class="fill"></i></div>
              <div class="row bb"><span>Code nature Office des Changes :</span><i class="fill"></i></div>
              <div class="row bb"><span>Engagement/Certificat d’importation/Autorisation Office des Changes n° :</span><i class="fill"></i></div>
            </div>
          </section>

          <div class="footnotes">
            <span class="bb">(1) S’il s’agit d’un transfert passible de la retenue à la source</span>
            <span class="bb">(2) A renseigner obligatoirement</span>
            <span class="bb"><b>*</b>Engagement du client pour règlement de la RAS.</span>
          </div>
          <div class="terms bb">
            <span><b>**</b>Quittance de paiement de la RAS.</span>
            <div class="legal">
              <p v-for="(line, i) in legal" :key="i" :class="{ short: shortLines.includes(i) }">{{ line }}</p>
            </div>
          </div>

          <div class="signatures">
            <span class="bb">Date, cachet et signature du client</span>
            <span class="bb">Date, cachet et signature autorisée du guichet</span>
          </div>

          <footer class="bb">
            Attijariwafa bank, Société Anonyme au capital de 2.035.272.260&nbsp; DH Agréée en qualité d’établissement de crédit<br />
            par arrêté du Ministre des Finances et de la privatisation n° 2269-03 du 22 décembre 2003<br />
            Siège social : 2, Boulevard Moulay Youssef – Casablanca 20.000 - R.C. 333 - Tél. : 022 22 41 69/022 29 88 88 – B.P. 11.141
          </footer>
        </article>
      </main>

      <div class="scroll"><i></i></div>
      <button type="button" class="gutter right" aria-label="Replier le volet droit"><i class="point-right"></i></button>

      <aside class="panel">
        <h2>FORMAT</h2>
        <div class="select font"><select disabled aria-label="Police"><option></option></select></div>
        <div class="line size-line">
          <div class="select size"><select disabled aria-label="Corps"><option></option></select></div>
          <button type="button" class="swatch" aria-label="Couleur"><i></i></button>
        </div>
        <div class="line icons styles">
          <button v-for="s in textStyles" :key="s" type="button" class="icon-btn" :aria-label="s"><Icon :name="s" /></button>
        </div>
        <div class="line lists">
          <div class="split"><button type="button" aria-label="Puces"><Icon name="bullets" /></button><button type="button" aria-label="Choix des puces"><i class="caret"></i></button></div>
          <div class="split"><button type="button" aria-label="Numéros"><Icon name="numbers" /></button><button type="button" aria-label="Choix des numéros"><i class="caret"></i></button></div>
        </div>
        <div class="line icons aligns">
          <button v-for="a in alignments" :key="a" type="button" class="icon-btn" :aria-label="a"><Icon :name="a" /></button>
        </div>
        <div class="line metrics">
          <Icon name="leading" /><div class="select"><select disabled aria-label="Interligne"><option></option></select></div>
          <Icon name="spacing" /><div class="select"><select disabled aria-label="Espacement"><option></option></select></div>
        </div>
        <div class="line metrics">
          <Icon name="scaleX" /><div class="select"><select disabled aria-label="Échelle"><option></option></select></div>
          <span class="kern">AV<svg width="48" height="16" viewBox="0 0 48 16" aria-hidden="true" v-html="glyphs.arrowX"></svg></span>
          <div class="select"><select disabled aria-label="Approche"><option></option></select></div>
        </div>
        <hr />
        <h2>OBJETS</h2>
        <div class="line icons objects">
          <button type="button" class="icon-btn" aria-label="Miroir vertical"><Icon name="flipV" /></button>
          <button type="button" class="icon-btn" aria-label="Miroir horizontal"><Icon name="flipH" /></button>
          <button type="button" class="icon-btn" aria-label="Recadrer"><Icon name="cropObj" /></button>
          <button type="button" class="icon-btn menu" aria-label="Aligner"><Icon name="alignObj" /><i class="caret"></i></button>
        </div>
        <div class="line icons objects">
          <button type="button" class="icon-btn" aria-label="Pivoter à gauche"><Icon name="rotL" /></button>
          <button type="button" class="icon-btn" aria-label="Pivoter à droite"><Icon name="rotR" /></button>
          <button type="button" class="icon-btn" aria-label="Remplacer"><Icon name="replace" /></button>
          <button type="button" class="icon-btn menu" aria-label="Disposer"><Icon name="arrange" /><i class="caret"></i></button>
        </div>
        <button type="button" class="editwith"><Icon name="pencil" /><span>Modifier avec...</span><i class="caret"></i></button>
        <hr />
        <h2>DOCUMENTS NUMERISES</h2>
        <button type="button" class="settings"><Icon name="gear" /><span>Paramètres</span></button>
        <label class="check off"><input type="checkbox" disabled /><span>Reconnaître le texte</span></label>
        <hr />
        <label class="check first"><input v-model="showBoxes" type="checkbox" /><span>Afficher les rectangles englobants</span></label>
        <label class="check last"><input v-model="restrict" type="checkbox" /><span>Restreindre la modification</span></label>
      </aside>

      <nav class="rail">
        <button v-for="(r, i) in rail" :key="i" type="button" :class="{ on: r.icon === 'layout' }" :style="{ color: r.color }" :aria-label="r.icon"><Icon :name="r.icon" /></button>
      </nav>
    </div>

    <div class="desktop">
      <div class="dock">
        <svg width="100%" height="14" viewBox="0 0 1922 14" preserveAspectRatio="none" aria-hidden="true">
          <g fill="#f2f2f2"><ellipse cx="94" cy="16" rx="12" ry="5" /><ellipse cx="152" cy="16" rx="12" ry="5" /><path d="M490 14L514 10L517 14Z" /><ellipse cx="616" cy="16" rx="12" ry="6" /><ellipse cx="1080" cy="16" rx="12" ry="5" /><ellipse cx="1569" cy="18" rx="20" ry="6" /><path d="M1814 9H1840V14H1814Z" /></g>
          <g fill="#c9c8c0"><path d="M775 12H806V14H775ZM833 12H864V14H833ZM891 12H922V14H891ZM949 12H980V14H949ZM1290 12H1320V14H1290ZM1355 12H1386V14H1355ZM1413 12H1444V14H1413Z" /><ellipse cx="1886" cy="16" rx="18" ry="5" /></g>
          <path d="M206 14Q208 8 221 8T236 14Z" fill="#f04438" />
          <path d="M305 12L336 8L341 14H305Z" fill="#b98a4a" />
          <path d="M384 13L398 10L399 14H384Z" fill="#d9443c" />
          <path d="M432 13L456 9L459 14H432Z" fill="#f5d848" />
          <ellipse cx="1022" cy="16" rx="12" ry="6" fill="#38b6e8" />
          <path d="M1030 14Q1032 8 1040 8T1050 14ZM1320 14Q1322 8 1330 8T1340 14Z" fill="#f04438" />
          <ellipse cx="1137" cy="16" rx="12" ry="5" fill="#b45ce0" />
          <ellipse cx="1195" cy="16" rx="12" ry="5" fill="#4a4a48" />
          <ellipse cx="1254" cy="16" rx="12" ry="5" fill="#f3b32e" />
          <path d="M1495 12H1526V14H1495Z" fill="#a0503c" />
          <path d="M1662 14Q1666 7 1672 7H1700Q1707 7 1711 14Z" fill="#400006" />
          <path d="M1720 14Q1724 7 1730 7H1758Q1765 7 1769 14Z" fill="#052540" />
          <path d="M1470 9V14M1787 9V14" stroke="#3c3f34" stroke-width="2" />
        </svg>
      </div>
    </div>
  </div>
</template>

<style>
html,
body {
  margin: 0;
}
</style>

<style scoped>
.window {
  display: flex;
  flex-direction: column;
  min-height: 100vh;
  color: #4b4b4b;
  background: #fafafa;
  font-family: 'Liberation Sans', Arial, sans-serif;
  font-size: 26px;
}
.window *,
.window *::before,
.window *::after {
  box-sizing: border-box;
}
button {
  padding: 0;
  border: 0;
  background: none;
  color: inherit;
  font: inherit;
}
h1, h2, h3, p {
  margin: 0;
}
svg {
  display: block;
  flex: none;
}
.caret {
  flex: none;
  border: solid transparent;
  border-width: 8px 7px 0;
  border-top-color: currentColor;
}

/* title bar */
.titlebar {
  position: relative;
  display: flex;
  align-items: center;
  justify-content: center;
  height: 44px;
  padding: 1px 0 0 4px;
  border-bottom: 1px solid #a6a6a6;
  background: linear-gradient(#e8e8e8, #cbcbcb);
  font-size: 25px;
}
.lights {
  position: absolute;
  left: 5px;
  display: flex;
  gap: 16px;
}
.lights i {
  width: 24px;
  height: 24px;
  border-radius: 50%;
}
.lights .red {
  background: radial-gradient(circle, #4d0000 4px, #ff5f57 5px);
}
.lights .yellow {
  background: #febc2e;
}
.lights .green {
  background: #28c840;
}
.doc-title {
  display: flex;
  align-items: center;
  gap: 12px;
}

/* tabs */
.tabbar {
  display: flex;
  height: 72px;
  background: #e9e9e9;
  box-shadow: inset 0 -2px #cdcdcd;
}
.home {
  padding: 0 0 4px 19px;
  font-size: 34px;
}
.home.tools {
  padding: 0 55px 4px 57px;
}
.tabs {
  display: flex;
  border-left: 1px solid #cdcdcd;
}
.tab {
  position: relative;
  width: 360px;
  padding-top: 5px;
  border-right: 1px solid #cdcdcd;
  color: #323232;
  font-size: 27px;
}
.tab.active {
  background: #fafafa;
}
.close {
  position: absolute;
  top: 30px;
  right: 18px;
}
.account {
  display: flex;
  align-items: center;
  gap: 35px;
  margin-left: auto;
  padding: 0 19px 4px 0;
  color: #6e6e6e;
}

/* toolbar */
.icon-btn {
  display: flex;
  align-items: center;
  color: #6e6e6e;
}
.icon-btn.dim {
  color: #b3b3b3;
}
.toolbar {
  display: flex;
  align-items: center;
  height: 94px;
  padding: 0 60px 0 0;
  border-bottom: 2px solid #cbcbcb;
}
.group {
  display: flex;
  align-items: center;
  gap: 40px;
}
.side {
  flex: 1 1 0;
  padding-left: 15px;
}
.pager {
  display: flex;
  align-items: center;
  gap: 14px;
  height: 56px;
  padding-right: 40px;
  border-right: 2px solid #cdcdcd;
  color: #323232;
  font-size: 25px;
}
.pager input {
  width: 52px;
  height: 56px;
  padding: 4px 8px 0 0;
  border: 0;
  border-bottom: 2px solid #cdcdcd;
  background: none;
  color: inherit;
  font: inherit;
  text-align: center;
}
.pager span {
  padding-top: 4px;
}

/* edit bar */
.editbar {
  display: flex;
  align-items: center;
  gap: 31px;
  height: 94px;
  padding: 0 19px 2px 20px;
  border-bottom: 2px solid #cbcbcb;
  box-shadow: inset 9px 0 #d9368f;
}
h1 {
  margin: 0 9px 0 10px;
  padding-top: 3px;
  font-size: 29px;
  white-space: nowrap;
}
.edit-tool {
  display: flex;
  align-items: center;
  gap: 10px;
  white-space: nowrap;
}
.edit-tool svg {
  color: #6e6e6e;
}
.edit-tool span {
  padding-top: 3px;
}
.edit-tool .caret {
  margin: 0 2px 0 -8px;
}
.edit-tool.current,
.edit-tool.current svg {
  color: #0d72cf;
}
.done {
  width: 183px;
  height: 64px;
  margin-left: auto;
  padding-bottom: 4px;
  border: 2px solid #4b4b4b;
  border-radius: 32px;
  font-size: 29px;
  font-weight: 700;
}

/* workspace */
.workspace {
  display: flex;
  flex: 1;
}
.navpane {
  display: flex;
  flex: none;
  flex-direction: column;
  gap: 46px;
  width: 79px;
  padding: 42px 0 0 10px;
  border-right: 2px solid #cbcbcb;
}
.gutter {
  display: flex;
  flex: none;
  align-items: center;
  justify-content: center;
  width: 37px;
  background: #e9e9e9;
}
.gutter.right {
  border: solid #cbcbcb;
  border-width: 0 2px;
}
.point-left,
.point-right {
  border: solid transparent;
  border-width: 11px 0;
}
.point-left {
  border-right: 12px solid #5e5e5e;
}
.point-right {
  border-left: 12px solid #5e5e5e;
}
.canvas {
  display: flex;
  flex: 1;
  align-items: flex-start;
  justify-content: center;
  padding: 44px 0 46px;
  background: #999;
}
.scroll {
  flex: none;
  width: 31px;
  padding: 1px 2px;
}
.scroll i {
  display: block;
  height: 14px;
  background: #bdbdbd;
}

/* document */
.page {
  width: 1066px;
  padding: 49px 47px 17px 50px;
  border: 2px solid #c9c9c9;
  background: #fff;
  color: #1a1a1a;
  font-family: Roboto, 'Liberation Sans', sans-serif;
  font-size: 18px;
  line-height: 21px;
  white-space: nowrap;
}
.bb {
  --edge: #8f8f8f;
  position: relative;
}
.boxed .bb::after {
  content: '';
  position: absolute;
  inset: var(--box, -5px -8px -3px -6px);
  background:
    repeating-linear-gradient(90deg, var(--edge) 0 4px, transparent 4px 8px) top / 100% 2px no-repeat,
    repeating-linear-gradient(90deg, var(--edge) 0 4px, transparent 4px 8px) bottom / 100% 2px no-repeat,
    repeating-linear-gradient(var(--edge) 0 4px, transparent 4px 9px) left / 2px 100% no-repeat,
    repeating-linear-gradient(var(--edge) 0 4px, transparent 4px 9px) right / 2px 100% no-repeat;
  pointer-events: none;
}
.masthead {
  display: flex;
  align-items: center;
  margin-bottom: 65px;
}
.brand {
  display: flex;
  flex: none;
  flex-direction: column;
  width: 230px;
  padding-left: 16px;
}
.brand em {
  color: #e8533f;
  font-style: normal;
  font-weight: 400;
}
.brand-ar {
  width: 181px;
  font-family: 'DejaVu Sans', sans-serif;
  font-size: 24px;
  font-weight: 700;
  line-height: 30px;
}
.brand-fr {
  font-size: 24px;
  font-weight: 700;
  line-height: 28px;
}
.masthead h2 {
  flex: none;
  width: 634px;
  padding: 7px 0 7px 28px;
  border: 2px solid #000;
  color: #000;
  font-size: 21px;
  line-height: 33px;
}
.masthead h2 .bb {
  display: inline-block;
  --box: 0 -9px 0 -9px;
}
.card {
  width: 965px;
  border: 1px solid #000;
}
.card h3 {
  display: flex;
  height: 25px;
  padding-left: 10px;
  border-bottom: 1px solid #000;
  color: #000;
  font-size: 17px;
  line-height: 24px;
}
.card h3 .bb {
  --box: -3px -9px -3px -6px;
}
.card sup {
  font-size: 11px;
  line-height: 1;
}
.rows {
  padding: 7px 18px 5px 10px;
}
.rows.tall {
  line-height: 22px;
}
.row {
  display: flex;
  align-items: baseline;
  gap: 5px;
}
.fill {
  flex: 1;
  height: 1px;
  background: repeating-linear-gradient(90deg, #222 0 1px, transparent 1px 2px);
}
.third {
  display: flex;
  flex: none;
  align-items: baseline;
  gap: 5px;
  width: 401px;
}
.country {
  display: flex;
  flex: none;
  align-items: baseline;
  gap: 5px;
  width: 177px;
}
.client .rows {
  padding: 8px 11px 7px 10px;
}
.spaced {
  margin-top: 20px;
}
.typed {
  color: #000;
  margin-left: 4px;
  font-family: 'Liberation Sans', sans-serif;
  font-size: 23px;
  line-height: 17px;
  --box: -13px -7px -8px -7px;
}
.amount {
  margin-top: 9px;
}
.request {
  padding: 4px 0 0 11px;
}
.request p {
  width: max-content;
  line-height: 27px;
  --box: -2px -8px 2px -8px;
}
.choices {
  display: flex;
  align-items: center;
  padding-top: 1px;
}
.options {
  display: flex;
  flex-direction: column;
  align-items: flex-start;
  width: 320px;
  line-height: 22px;
}
.options .bb {
  --box: -4px -10px -3px -8px;
}
.pick {
  display: flex;
  align-items: center;
}
.pick input {
  flex: none;
  width: 13px;
  height: 13px;
  margin: 0 11px 0 1px;
  appearance: none;
  border: solid #000;
  border-width: 1px 3px 3px 1px;
  background: #fff;
}
.pick input:checked {
  background: linear-gradient(135deg, #fff 60%, #000 62%);
}
.pick input[type='radio'] {
  width: 14px;
  height: 14px;
  border-width: 1px 2px 2px 1px;
  border-radius: 50%;
}
.pick input[type='radio']:checked {
  background: radial-gradient(circle, #000 4px, #fff 5px);
}
.tick {
  position: absolute;
  top: -14px;
  left: -5px;
}
.bracket {
  width: 6px;
  height: 42px;
  border: solid #000;
  border-width: 1px 1px 1px 0;
}
.pointer {
  margin: 0 27px 0 7px;
  border: solid transparent;
  border-width: 4px 0 4px 7px;
  border-left-color: #000;
}
.follow {
  --box: -4px -9px -4px -8px;
}
.payee {
  margin-top: 8px;
}
.payee .rows {
  padding: 8px 14px 7px 10px;
}
.payee .third {
  width: 398px;
}
.purpose {
  margin-top: 10px;
}
.purpose .rows {
  padding: 7px 18px 9px 10px;
}
.other {
  display: flex;
  flex: none;
  align-items: baseline;
  gap: 5px;
  width: 462px;
}
.remarks {
  margin-top: 9px;
}
.remarks .rows {
  display: flex;
  padding: 17px 5px 0;
}
.remark {
  color: #000;
  font-family: 'Liberation Sans', sans-serif;
  font-size: 20px;
  line-height: 30px;
  --box: -1px -8px -1px -7px;
}
.trio {
  display: flex;
  align-items: flex-start;
  gap: 17px;
  width: 965px;
  margin-top: 11px;
}
.rate {
  width: 406px;
}
.rate .rows {
  padding: 17px 20px 14px 10px;
}
.rate .typed {
  font-size: 22px;
}
.fees {
  width: 204px;
}
.fees .rows,
.tax .rows {
  display: flex;
  flex-direction: column;
  align-items: flex-start;
}
.fees .rows {
  padding: 6px 0 25px 11px;
}
.tax {
  flex: 1;
}
.tax .rows {
  padding: 5px 0 4px 11px;
  line-height: 18px;
}
.tax .bb {
  --box: -6px -8px -4px -7px;
}
.tax .pick input {
  margin-right: 10px;
}
.indent {
  margin-left: 24px;
}
.pair {
  display: flex;
  gap: 16px;
}
.legalinfo {
  margin-top: 5px;
}
.legalinfo h3 {
  height: 26px;
}
.legalinfo .rows {
  padding: 8px 18px 8px 10px;
}
.wide {
  width: 325px;
}
.footnotes {
  display: flex;
  flex-direction: column;
  align-items: flex-start;
  margin-top: 8px;
  padding-left: 1px;
  font-size: 12px;
  line-height: 14px;
}
.footnotes .bb {
  --box: -4px -8px -2px -8px;
}
b {
  display: inline-block;
  width: 16px;
  font-weight: 400;
}
.terms {
  padding-left: 1px;
  font-size: 12px;
  line-height: 14px;
  --box: -2px -8px -1px -7px;
}
.legal {
  padding-top: 12px;
  line-height: 15px;
}
.legal p {
  text-align: justify;
  text-align-last: justify;
  white-space: normal;
}
.legal .short {
  text-align-last: left;
}
.signatures {
  display: flex;
  justify-content: space-between;
  padding: 8px 0 0 1px;
  font-weight: 700;
  font-size: 16px;
  line-height: 20px;
}
.signatures .bb {
  --box: -3px -8px -3px -8px;
}
footer {
  width: max-content;
  margin: 75px auto 0;
  font-size: 14px;
  line-height: 18px;
  text-align: center;
  --box: -2px -8px -1px -8px;
}

/* right panel */
.panel {
  flex: none;
  width: 604px;
  padding: 42px 30px 0;
  border-right: 2px solid #cbcbcb;
}
.panel h2 {
  font-size: 24px;
  line-height: 32px;
}
.panel .caret,
.panel .icon-btn,
.panel .line {
  color: #b3b3b3;
}
.line {
  display: flex;
}
.select {
  position: relative;
  border-bottom: 2px solid #cbcbcb;
}
.select::after {
  content: '';
  position: absolute;
  right: 14px;
  bottom: 24px;
  border: solid transparent;
  border-width: 8px 7px 0;
  border-top-color: #b3b3b3;
}
.select select {
  display: block;
  width: 100%;
  height: 58px;
  appearance: none;
  border: 0;
  background: none;
}
.font {
  width: 360px;
  margin-top: 20px;
}
.size-line {
  gap: 20px;
  margin-top: 20px;
}
.size {
  width: 132px;
}
.swatch {
  display: flex;
  width: 60px;
  height: 60px;
  padding: 7px;
  border: 1px solid #b3b3b3;
  background: #fff;
}
.swatch i {
  flex: 1;
  background: #808080;
}
.styles {
  gap: 30px;
  margin-top: 20px;
}
.lists {
  gap: 20px;
  margin-top: 20px;
}
.split {
  display: flex;
  width: 132px;
  height: 60px;
  border: 2px solid #6e6e6e;
}
.split button {
  display: flex;
  align-items: center;
  justify-content: center;
}
.split button:first-child {
  width: 82px;
  padding-top: 2px;
  border-right: 2px solid #6e6e6e;
}
.split button:last-child {
  flex: 1;
}
.aligns {
  gap: 30px;
  margin-top: 20px;
}
.metrics {
  align-items: center;
  gap: 11px;
  margin-top: 20px;
}
.metrics .select {
  width: 109px;
  margin-right: 11px;
}
.kern {
  display: flex;
  flex-direction: column;
  align-items: center;
  font-size: 26px;
  font-weight: 700;
  line-height: 28px;
}
hr {
  width: 100%;
  height: 2px;
  margin: 32px 0 34px;
  border: 0;
  background: #cbcbcb;
}
.objects {
  gap: 30px;
  margin-top: 20px;
}
.menu .caret {
  margin-left: 4px;
}
.editwith {
  display: flex;
  align-items: center;
  width: 100%;
  height: 44px;
  margin-top: 24px;
  padding-right: 14px;
  color: #b3b3b3;
  font-size: 28px;
}
.editwith span,
.settings span {
  margin-left: 9px;
}
.editwith .caret {
  margin-left: auto;
}
.settings {
  display: flex;
  align-items: center;
  height: 48px;
  margin-top: 20px;
}
.settings svg {
  color: #6e6e6e;
}
.check {
  display: flex;
  align-items: flex-start;
  gap: 20px;
  height: 34px;
  font-size: 28px;
}
.check.off {
  margin: 18px 0 36px;
  color: #b3b3b3;
}
.check.last {
  margin-top: 26px;
}
.check input {
  flex: none;
  display: grid;
  place-content: center;
  width: 34px;
  height: 34px;
  margin: 0;
  appearance: none;
  border: 2px solid #6e6e6e;
}
.check input:checked {
  border-color: #1f74cc;
  background: #1f74cc;
}
.check input:checked::before {
  content: '';
  width: 24px;
  height: 12px;
  margin-bottom: 6px;
  border: solid #fff;
  border-width: 0 0 5px 5px;
  transform: rotate(-45deg);
}
.check span {
  padding-top: 6px;
  line-height: 32px;
}
.off input {
  border-color: #b3b3b3;
}

/* tool rail */
.rail {
  display: flex;
  flex: none;
  flex-direction: column;
  width: 81px;
}
.rail button {
  display: flex;
  align-items: center;
  justify-content: center;
  height: 92px;
  padding-left: 10px;
}
.rail .on {
  background: #d9368f;
}

/* strip of desktop below the window */
.desktop {
  padding: 0 19% 0 11%;
  border-top: 2px solid #6f6f6f;
  background: linear-gradient(90deg, #333, #262626 12%, #14150f 80%, #2a2b22);
}
.dock {
  border-radius: 12px 12px 0 0;
  background: linear-gradient(90deg, #80594f, #6c5056 16%, #74605a 30%, #817d78 42%, #75805a 50%, #857b70 58%, #6c7056 72%, #78825e 86%, #7d8b66);
}
</style>
